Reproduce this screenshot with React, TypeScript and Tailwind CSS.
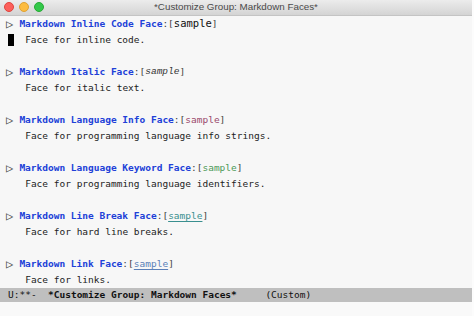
import React from 'react';

const mono = "font-['DejaVu_Sans_Mono',monospace]";

interface Face {
  name: string;
  sample: React.ReactNode;
  doc: string;
}

const faces: Face[] = [
  {
    name: 'Markdown Inline Code Face',
    sample: <span className="text-[10.5px] text-[#111]">sample</span>,
    doc: 'Face for inline code.',
  },
  {
    name: 'Markdown Italic Face',
    sample: <span className="italic font-['Liberation_Mono',monospace] text-[#333]">sample</span>,
    doc: 'Face for italic text.',
  },
  {
    name: 'Markdown Language Info Face',
    sample: <span className="text-[#9a4a6c]">sample</span>,
    doc: 'Face for programming language info strings.',
  },
  {
    name: 'Markdown Language Keyword Face',
    sample: <span className="text-[#4e9a58]">sample</span>,
    doc: 'Face for programming language identifiers.',
  },
  {
    name: 'Markdown Line Break Face',
    sample: <span className="text-[#3a8f8f] underline underline-offset-2">sample</span>,
    doc: 'Face for hard line breaks.',
  },
  {
    name: 'Markdown Link Face',
    sample: <span className="text-[#5a7fb8] underline underline-offset-2">sample</span>,
    doc: 'Face for links.',
  },
];

function FaceEntry({ face, cursor, last }: { face: Face; cursor?: boolean; last?: boolean }) {
  return (
    <div className="flex flex-col">
      <div className="h-[16px] flex items-center whitespace-pre">
        <span className="w-[11.4px] -ml-[2px] text-[12px] leading-none text-[#444]">▷</span>
        <span className="ml-[2px] font-bold text-[#2040d8]">{face.name}</span>
        <span className="text-[#444]">:[</span>
        {face.sample}
        <span className="text-[#444]">]</span>
      </div>
      <div className="h-[16px] flex items-center whitespace-pre text-[#222]">
        {cursor ? (
          <span className="w-[5.7px] h-[12px] bg-black" />
        ) : (
          <span> </span>
        )}
        <span>{'  ' + face.doc}</span>
      </div>
      {!last && <div className="h-[16px]" />}
    </div>
  );
}

export default function App() {
  return (
    <div className={`w-[474px] h-[316px] flex bg-[#fcfcfc] overflow-hidden ${mono} text-[9.5px]`}>
      <div className="w-[472px] h-full flex flex-col bg-[#f7f7f7]">
        {/* Title bar */}
        <div className="relative h-[16px] shrink-0 flex items-center justify-center bg-gradient-to-b from-[#ececec] to-[#d4d4d4] border-b border-[#c4c4c4]">
          <div className="absolute left-[4px] top-[2px] flex gap-[5px]">
            <span className="w-[10px] h-[10px] rounded-full bg-[#fc605b] border border-[#e0443e]" />
            <span className="w-[10px] h-[10px] rounded-full bg-[#fdbc40] border border-[#dea236]" />
            <span className="w-[10px] h-[10px] rounded-full bg-[#34c84a] border border-[#27aa35]" />
          </div>
          <span className="font-['Liberation_Sans',sans-serif] text-[9.8px] text-[#4a4a4a]">
            *Customize Group: Markdown Faces*
          </span>
        </div>

        {/* Buffer content */}
        <div className="flex flex-col pl-[8px]">
          {faces.map((f, i) => (
            <FaceEntry key={f.name} face={f} cursor={i === 0} last={i === faces.length - 1} />
          ))}
        </div>

        {/* Mode line */}
        <div className="h-[14px] shrink-0 flex items-center pl-[8px] bg-[#bfbfbf] text-[#111] whitespace-pre">
          <span>U:**-  </span>
          <span className="font-bold">*Customize Group: Markdown Faces*</span>
          <span>     (Custom)</span>
        </div>
        <div className="flex-1 bg-[#f9f9f9]" />
      </div>
    </div>
  );
}
